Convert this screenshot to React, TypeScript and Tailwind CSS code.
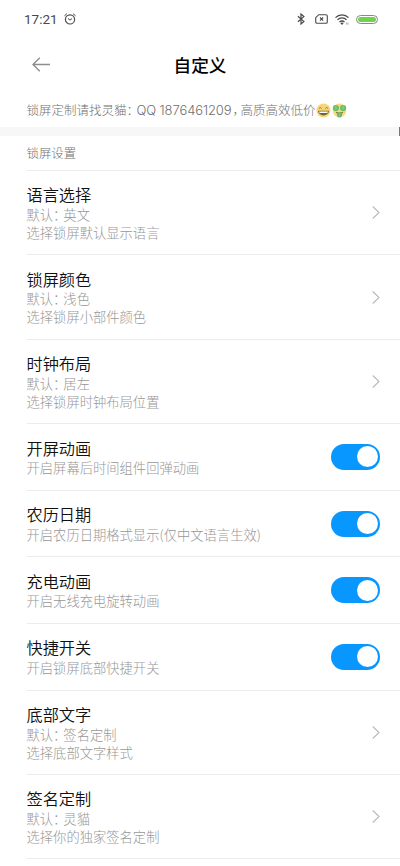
import { useState } from "react";

type Item = {
  title: string;
  value?: string;
  summary: string;
  toggle?: boolean;
};

const items: Item[] = [
  { title: "语言选择", value: "英文", summary: "选择锁屏默认显示语言" },
  { title: "锁屏颜色", value: "浅色", summary: "选择锁屏小部件颜色" },
  { title: "时钟布局", value: "居左", summary: "选择锁屏时钟布局位置" },
  { title: "开屏动画", summary: "开启屏幕后时间组件回弹动画", toggle: true },
  { title: "农历日期", summary: "开启农历日期格式显示(仅中文语言生效)", toggle: true },
  { title: "充电动画", summary: "开启无线充电旋转动画", toggle: true },
  { title: "快捷开关", summary: "开启锁屏底部快捷开关", toggle: true },
  { title: "底部文字", value: "签名定制", summary: "选择底部文字样式" },
  { title: "签名定制", value: "灵貓", summary: "选择你的独家签名定制" },
];

function StatusBar() {
  return (
    <div className="flex h-[38px] items-center justify-between pl-6 pr-[22.5px] text-[#4a4a4a]">
      <div className="flex items-center">
        <span className="w-[40px] font-['Roboto'] text-[13.5px] leading-[18px]">17:21</span>
        <svg className="-mt-px h-3 w-3" viewBox="0 0 12 12" fill="none" stroke="currentColor" strokeLinecap="round">
          <circle cx="6" cy="6.4" r="4.6" strokeWidth="1.2" />
          <path d="M4.3 5.7L6 7.1l1.8-1.4M.7 2.6L2.6.9M11.3 2.6L9.4.9" strokeWidth="1" />
        </svg>
      </div>
      <div className="flex items-center">
        <svg className="mr-[9.5px] h-3 w-2" viewBox="0 0 8 12" fill="none" stroke="currentColor" strokeWidth="1.2">
          <path d="M.9 3.2l6 5.2L4 11V1l2.9 2.6-6 5.2" />
        </svg>
        <svg className="mr-[7px] h-[10px] w-[13px]" viewBox="0 0 13 10" fill="none" stroke="currentColor">
          <path d="M3.7.7H11a1.3 1.3 0 011.3 1.3v6A1.3 1.3 0 0111 9.3H2A1.3 1.3 0 01.7 8V3.7z" strokeWidth="1.1" />
          <path d="M5 3.5l3.2 3.2M8.2 3.5L5 6.7" strokeWidth="1.1" />
        </svg>
        <svg className="mr-[7px] h-[11px] w-[14px]" viewBox="0 0 14 11" fill="none" stroke="currentColor" strokeWidth="1.3">
          <path d="M.5 3.6a9.2 9.2 0 0113 0M2.5 5.9a6.2 6.2 0 019 0M4.5 8.1a3.4 3.4 0 015 0" />
          <path d="M5.4 9.2L7 10.9l1.6-1.7a2 2 0 00-3.2 0z" fill="currentColor" stroke="none" />
          <path d="M11.6 8.5v2M13 8.7v2" strokeWidth=".8" opacity=".6" />
        </svg>
        <span className="flex h-[9px] w-[22px] rounded-full border border-[#888] p-px">
          <span className="flex-1 rounded-full bg-[#70d44b]" />
        </span>
      </div>
    </div>
  );
}

function GrinEmoji() {
  return (
    <svg className="h-[15px] w-[15px]" viewBox="0 0 15 15" fill="none">
      <circle cx="7.5" cy="7.5" r="7" fill="#f6d775" />
      <path d="M2.8 5.5q1.5-2 3 0M9.2 5.5q1.5-2 3 0" stroke="#94763f" strokeWidth=".9" />
      <path d="M2 7.8h11a5.5 4.6 0 01-11 0z" fill="#76603e" />
      <path d="M3 8.4h9l-.6 1.5H3.6z" fill="#fff" />
    </svg>
  );
}

function MoneyEmoji() {
  return (
    <svg className="ml-[1px] h-[15px] w-[15px]" viewBox="0 0 15 15" fill="none">
      <circle cx="7.5" cy="7.4" r="6.8" fill="#f3dc7b" />
      <circle cx="3.9" cy="5" r="3.1" fill="#69bd6d" />
      <circle cx="11.1" cy="5" r="3.1" fill="#69bd6d" />
      <path d="M4.8 3.9c-1.8-.8-2.2.8-.9 1s.8 1.8-1 1M12 3.9c-1.8-.8-2.2.8-.9 1s.8 1.8-1 1" stroke="#b5dd9c" strokeWidth=".5" />
      <path d="M3.6 8.7q3.9 1.5 7.8 0-.7 2-2 2.4H5.6q-1.3-.4-2-2.4z" fill="#806c43" />
      <path d="M5 9.5h5v3.6q-2.5 3-5 0z" fill="#65b86c" />
      <path d="M7.5 10.3v3" stroke="#a9d99b" strokeWidth=".6" />
    </svg>
  );
}

function Toggle() {
  const [on, setOn] = useState(true);

  return (
    <button
      role="switch"
      aria-checked={on}
      onClick={() => setOn(!on)}
      className={
        on
          ? "flex h-[26px] w-[49px] items-center justify-end rounded-full bg-[#0896ff] px-[2.5px]"
          : "flex h-[26px] w-[49px] items-center justify-start rounded-full bg-[#d8d8d8] px-[2.5px]"
      }>
      <span className="h-[21px] w-[21px] rounded-full bg-white" />
    </button>
  );
}

function Row({ item }: { item: Item }) {
  return (
    <div
      className={
        item.toggle
          ? "ml-[27px] flex h-[66.6px] items-center justify-between border-b border-[#ececec] pr-5"
          : "ml-[27px] flex h-[84.4px] items-center justify-between border-b border-[#ececec] pr-5"
      }>
      <div className="-ml-[0.5px]">
        <div className="text-[16.2px] font-[350] leading-[22px] text-[#111]">{item.title}</div>
        <div className="mt-[0.6px] text-[13.3px] font-light leading-[18px] text-[#979797]">
          {item.value && (
            <div className="[font-feature-settings:'halt']">
              默认：<span className="ml-[3.6px]">{item.value}</span>
            </div>
          )}
          <div>{item.summary}</div>
        </div>
      </div>
      {item.toggle ? (
        <Toggle />
      ) : (
        <svg className="h-[13px] w-2" viewBox="0 0 8 13" fill="none" stroke="#b9b9b9" strokeWidth="1.1">
          <path d="M.8.5l6.2 6-6.2 6" />
        </svg>
      )}
    </div>
  );
}

export default function App() {
  return (
    <div className="h-[866px] w-[400px] overflow-hidden bg-white font-['Noto_Sans_CJK_SC',sans-serif]">
      <StatusBar />

      <header className="grid h-[54px] grid-cols-[60px_1fr_60px] items-center">
        <button className="-mt-[2px] pl-8">
          <svg className="h-[15px] w-[18px]" viewBox="0 0 18 15" fill="none" stroke="#8e8e8e" strokeWidth="1.4">
            <path d="M18 7.5H1M7.8.7L1 7.5l6.8 6.8" />
          </svg>
        </button>
        <h1 className="text-center text-[17.6px] font-medium leading-6 text-black">自定义</h1>
      </header>

      <div className="flex h-[35px] items-center whitespace-nowrap pl-[26.5px] pt-[2px] text-[12.5px] font-light text-[#707070]">
        <span className="w-[110px] [font-feature-settings:'halt']">锁屏定制请找灵貓：</span>
        <span className="w-[96px] font-['Inter'] text-[13px] tracking-[-0.1px]">QQ 1876461209</span>
        <span className="w-[8px] [font-feature-settings:'halt']">，</span>
        <span className="w-[75.5px]">高质高效低价</span>
        <GrinEmoji />
        <MoneyEmoji />
      </div>

      <div className="flex h-[9px] justify-end bg-[#f7f7f7]">
        <span className="w-px bg-[#777]" />
      </div>

      <div className="ml-[27px] flex h-[35px] items-center border-b border-[#ececec] pt-px text-[12.4px] font-light text-[#707070]">
        <span className="-ml-[0.5px]">锁屏设置</span>
      </div>

      {items.map((item) => (
        <Row key={item.title} item={item} />
      ))}
    </div>
  );
}
